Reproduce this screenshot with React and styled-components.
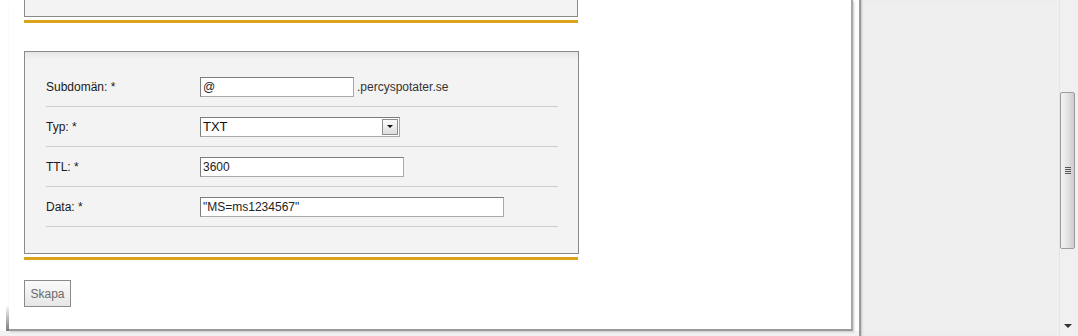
import React from 'react';
import styled, { createGlobalStyle } from 'styled-components';

const GlobalStyle = createGlobalStyle`
    html, body {
        margin: 0;
        padding: 0;
        background: #f0f0f0;
    }
    body {
        font-family: "Liberation Sans", Arial, sans-serif;
        font-size: 12px;
        color: #222;
    }
`;

const Page = styled.div`
    display: flex;
    width: 1078px;
    height: 336px;
    overflow: hidden;
    background: #f0f0f0;
`;

const LeftArea = styled.div`
    display: flex;
    flex-direction: column;
    width: 860px;
    background: #fff;
`;

const Main = styled.div`
    position: relative;
    height: 329px;
    margin-left: 9px;
    margin-right: 6px;
    padding-left: 15px;
    background: #fff;
    border-right: 2px solid #a8a8a8;
    border-bottom: 2px solid #9a9a9a;
    box-shadow: 1px 1px 2px #c8c8c8;

    &::before {
        content: '';
        position: absolute;
        left: -3px;
        bottom: -2px;
        width: 3px;
        height: 26px;
        background: linear-gradient(to bottom, rgba(140, 140, 140, 0), #7a7a7a);
    }
`;

const BottomStrip = styled.div`
    flex: 1;
    background: #f2f2f2;
`;

const PanelEnd = styled.div`
    width: 552px;
    height: 16px;
    background: #f3f3f3;
    border: 1px solid #8a8a8a;
    border-top: none;
`;

const GoldLine = styled.div`
    width: 554px;
    height: 3px;
    margin-top: 3px;
    background: #d9a31b;
`;

const Panel = styled.div`
    width: 512px;
    margin-top: 28px;
    padding: 15px 20px 26px 21px;
    background: linear-gradient(to bottom, #e6e6e6 0, #f3f3f3 8px, #f3f3f3 100%);
    border: 1px solid #8a8a8a;
`;

const Row = styled.div`
    box-sizing: border-box;
    display: flex;
    align-items: center;
    height: 40px;
    border-bottom: 1px solid #cfcfcf;
`;

const Label = styled.label`
    width: 154px;
    flex-shrink: 0;
    color: #1a1a1a;
    font-size: 12px;
`;

const Field = styled.div`
    display: flex;
    align-items: center;
    gap: 3px;
`;

const TextInput = styled.input`
    box-sizing: border-box;
    width: ${p => p.$w}px;
    height: 20px;
    margin: 0;
    padding: 0 2px;
    border: 1px solid;
    border-color: #7d7d7d #a9a9a9 #a9a9a9 #7d7d7d;
    background: #fff;
    font-family: "Liberation Sans", Arial, sans-serif;
    font-size: 12px;
    color: #222;
    outline: none;
`;

const Suffix = styled.span`
    color: #333;
    font-size: 12px;
`;

const Select = styled.div`
    box-sizing: border-box;
    display: flex;
    align-items: center;
    justify-content: space-between;
    width: 200px;
    height: 20px;
    padding: 0 1px 0 2px;
    border: 1px solid;
    border-color: #7d7d7d #a9a9a9 #a9a9a9 #7d7d7d;
    background: #fff;
    font-size: 13px;
    color: #111;
`;

const SelectArrow = styled.span`
    box-sizing: border-box;
    display: flex;
    align-items: center;
    justify-content: center;
    width: 16px;
    height: 16px;
    border: 1px solid #8e8e8e;
    background: linear-gradient(to bottom, #fbfbfb, #dedede);

    &::after {
        content: '';
        border-left: 3px solid transparent;
        border-right: 3px solid transparent;
        border-top: 3px solid #111;
    }
`;

const Button = styled.button`
    box-sizing: border-box;
    width: 47px;
    height: 27px;
    margin-top: 20px;
    padding: 0;
    border: 1px solid #8a8a8a;
    background: linear-gradient(to bottom, #fbfbfb, #e6e6e6);
    font-family: "Liberation Sans", Arial, sans-serif;
    font-size: 12px;
    color: #6a6a6a;
`;

const Sidebar = styled.div`
    width: 200px;
    background: #efefef;
    box-shadow: inset 2px 0 0 #9a9a9a, inset 4px 0 2px -1px #c4c4c4;
`;

const Scrollbar = styled.div`
    position: relative;
    width: 18px;
    background: #f0f0f0;
    border-left: 1px solid #e4e4e4;
`;

const Thumb = styled.div`
    position: absolute;
    left: 0;
    top: 92px;
    box-sizing: border-box;
    width: 15px;
    height: 157px;
    border: 1px solid #9c9c9c;
    border-radius: 2px;
    background: linear-gradient(to right, #f3f3f3, #e4e4e4 50%, #cbcbcb);
    display: flex;
    align-items: center;
    justify-content: center;

    &::after {
        content: '';
        width: 6px;
        height: 7px;
        background: repeating-linear-gradient(to bottom, #555 0, #555 1px, transparent 1px, transparent 2px);
    }
`;

const DownArrow = styled.div`
    position: absolute;
    left: 4px;
    top: 324px;
    border-left: 4px solid transparent;
    border-right: 4px solid transparent;
    border-top: 4px solid #333;
`;

const App = () => {
    return (
        <>
            <GlobalStyle />
            <Page>
                <LeftArea>
                    <Main>
                        <PanelEnd />
                        <GoldLine />
                        <Panel>
                            <Row>
                                <Label>Subdomän: *</Label>
                                <Field>
                                    <TextInput $w={154} defaultValue="@" />
                                    <Suffix>.percyspotater.se</Suffix>
                                </Field>
                            </Row>
                            <Row>
                                <Label>Typ: *</Label>
                                <Select>
                                    TXT
                                    <SelectArrow />
                                </Select>
                            </Row>
                            <Row>
                                <Label>TTL: *</Label>
                                <TextInput $w={204} defaultValue="3600" />
                            </Row>
                            <Row>
                                <Label>Data: *</Label>
                                <TextInput $w={304} defaultValue={'"MS=ms1234567"'} />
                            </Row>
                        </Panel>
                        <GoldLine />
                        <Button>Skapa</Button>
                    </Main>
                    <BottomStrip />
                </LeftArea>
                <Sidebar />
                <Scrollbar>
                    <Thumb />
                    <DownArrow />
                </Scrollbar>
            </Page>
        </>
    );
};

export default App;
